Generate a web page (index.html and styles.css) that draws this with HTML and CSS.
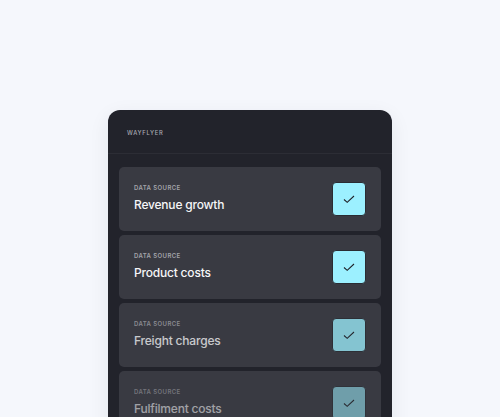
FILE: index.html
```html
<!DOCTYPE html>
<html>
<head>
<meta charset="utf-8">
<link rel="stylesheet" href="styles.css">
</head>
<body>
<div class="card">
  <div class="card-header">WAYFLYER</div>
  <div class="list">
    <div class="item">
      <div class="info"><div class="label">DATA SOURCE</div><div class="title">Revenue growth</div></div>
      <div class="check"><svg width="14" height="10" viewBox="0 0 14 10"><path d="M2 5.5 L5.2 8.3 L12 2" fill="none" stroke="#1f2128" stroke-width="1.1"/></svg></div>
    </div>
    <div class="item">
      <div class="info"><div class="label">DATA SOURCE</div><div class="title">Product costs</div></div>
      <div class="check"><svg width="14" height="10" viewBox="0 0 14 10"><path d="M2 5.5 L5.2 8.3 L12 2" fill="none" stroke="#1f2128" stroke-width="1.1"/></svg></div>
    </div>
    <div class="item fade1">
      <div class="info"><div class="label">DATA SOURCE</div><div class="title">Freight charges</div></div>
      <div class="check"><svg width="14" height="10" viewBox="0 0 14 10"><path d="M2 5.5 L5.2 8.3 L12 2" fill="none" stroke="#1f2128" stroke-width="1.1"/></svg></div>
    </div>
    <div class="item fade2">
      <div class="info"><div class="label">DATA SOURCE</div><div class="title">Fulfilment costs</div></div>
      <div class="check"><svg width="14" height="10" viewBox="0 0 14 10"><path d="M2 5.5 L5.2 8.3 L12 2" fill="none" stroke="#1f2128" stroke-width="1.1"/></svg></div>
    </div>
  </div>
</div>
</body>
</html>
```
FILE: styles.css
```css
html, body {
  margin: 0;
  padding: 0;
  height: 417px;
  overflow: hidden;
}
body {
  background: #f5f7fc;
  font-family: Inter, "Noto Sans", sans-serif;
  padding-top: 110px;
  box-sizing: border-box;
}
.card {
  width: 284px;
  height: 400px;
  margin: 0 auto;
  background: #22232b;
  border-radius: 12px;
  box-shadow: 0 6px 20px rgba(30, 35, 60, 0.08);
}
.card-header {
  height: 44px;
  box-sizing: border-box;
  padding: 19px 0 0 19px;
  font-size: 5.8px;
  font-weight: 500;
  letter-spacing: 0.7px;
  color: #a9aab2;
  border-bottom: 1px solid #2c2d35;
}
.list {
  padding: 13px 11px;
  display: flex;
  flex-direction: column;
  gap: 4px;
}
.item {
  height: 64px;
  background: #393a42;
  border-radius: 5px;
  display: flex;
  align-items: center;
  justify-content: space-between;
  padding: 0 15px;
}
.info {
  display: flex;
  flex-direction: column;
  padding-bottom: 3px;
}
.label {
  font-size: 6px;
  font-weight: 600;
  letter-spacing: 0.4px;
  color: #a3a4ab;
}
.title {
  margin-top: 6px;
  font-size: 12px;
  font-weight: 500;
  letter-spacing: -0.2px;
  color: #f6f6f8;
}
.check {
  width: 34px;
  height: 34px;
  box-sizing: border-box;
  border-radius: 4px;
  background: #9cf0ff;
  border: 1px solid #2a2c33;
  display: flex;
  align-items: center;
  justify-content: center;
}
.fade1 .info, .fade1 .check { opacity: 0.76; }
.fade2 .info, .fade2 .check { opacity: 0.55; }
```
